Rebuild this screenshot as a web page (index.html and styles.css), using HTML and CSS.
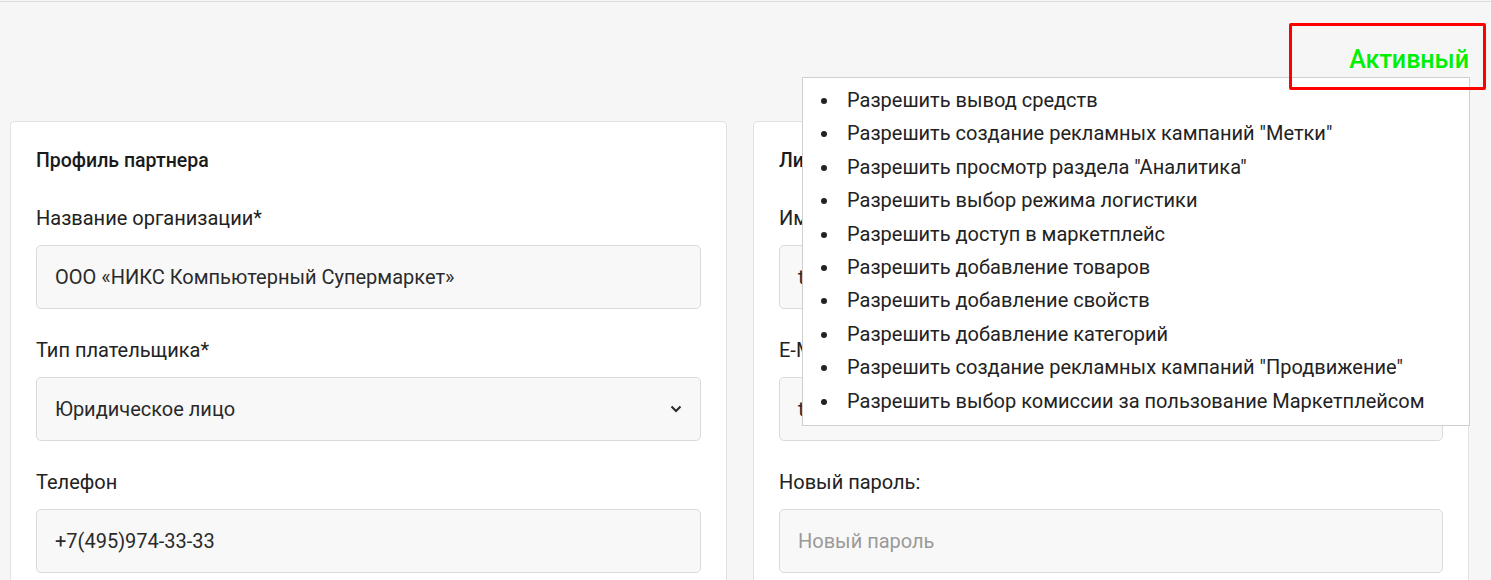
FILE: index.html
```html
<!DOCTYPE html>
<html lang="ru">
<head>
<meta charset="utf-8">
<title>Профиль партнера</title>
<link rel="stylesheet" href="styles.css">
</head>
<body>
<div class="page">
  <header class="topbar">
    <div class="status">Активный</div>
  </header>
  <main class="cards">
    <section class="card">
      <h2 class="card-title">Профиль партнера</h2>
      <div class="field">
        <label class="label">Название организации*</label>
        <div class="input">ООО «НИКС Компьютерный Супермаркет»</div>
      </div>
      <div class="field">
        <label class="label">Тип плательщика*</label>
        <div class="input select">
          <span>Юридическое лицо</span>
          <svg class="chev" width="12" height="8" viewBox="0 0 12 8"><path d="M1.5 1.5 L6 6 L10.5 1.5" fill="none" stroke="#2a2a2a" stroke-width="2"/></svg>
        </div>
      </div>
      <div class="field">
        <label class="label">Телефон</label>
        <div class="input">+7(495)974-33-33</div>
      </div>
    </section>
    <section class="card">
      <h2 class="card-title">Личные данные</h2>
      <div class="field">
        <label class="label">Имя</label>
        <div class="input">test</div>
      </div>
      <div class="field">
        <label class="label">E-Mail</label>
        <div class="input">test@nix.ru</div>
      </div>
      <div class="field">
        <label class="label">Новый пароль:</label>
        <div class="input placeholder">Новый пароль</div>
      </div>
    </section>
  </main>
  <ul class="perms">
    <li>Разрешить вывод средств</li>
    <li>Разрешить создание рекламных кампаний "Метки"</li>
    <li>Разрешить просмотр раздела "Аналитика"</li>
    <li>Разрешить выбор режима логистики</li>
    <li>Разрешить доступ в маркетплейс</li>
    <li>Разрешить добавление товаров</li>
    <li>Разрешить добавление свойств</li>
    <li>Разрешить добавление категорий</li>
    <li>Разрешить создание рекламных кампаний "Продвижение"</li>
    <li>Разрешить выбор комиссии за пользование Маркетплейсом</li>
  </ul>
  <div class="highlight"></div>
</div>
</body>
</html>
```

FILE: styles.css
```css
html, body {
  margin: 0;
  padding: 0;
  background: #f6f6f6;
}
body {
  font-family: Roboto, "Noto Sans", "Liberation Sans", sans-serif;
  color: #212121;
  padding-top: 1px;
}
.page {
  position: relative;
  border-top: 1px solid #dcdcdc;
  height: 578px;
  overflow: hidden;
}
.topbar {
  height: 119px;
  display: flex;
  justify-content: flex-end;
  padding-right: 22px;
}
.status {
  margin-top: 43px;
  height: 30px;
  line-height: 30px;
  font-size: 25px;
  font-weight: 500;
  color: #00f000;
}
.cards {
  display: grid;
  grid-template-columns: 717px 716px;
  column-gap: 26px;
  padding-left: 10px;
}
.card {
  background: #fff;
  border: 1px solid #e2e2e2;
  border-radius: 4px;
  padding: 29px 25px 30px;
  min-height: 500px;
}
.card-title {
  margin: 0 0 36px;
  font-size: 19.5px;
  line-height: 20px;
  font-weight: 500;
  color: #1a1a1a;
}
.field {
  margin-bottom: 30px;
}
.label {
  display: block;
  font-size: 20px;
  line-height: 22px;
  margin-bottom: 16px;
  color: #222;
}
.input {
  height: 62px;
  box-sizing: content-box;
  border: 1px solid #dadada;
  border-radius: 5px;
  background: #f8f8f8;
  padding: 0 18px;
  display: flex;
  align-items: center;
  font-size: 20px;
  color: #2a2a2a;
}
.select {
  justify-content: space-between;
  padding-right: 18px;
}
.chev {
  display: block;
}
.placeholder {
  color: #9a9a9a;
}
.perms {
  position: absolute;
  top: 75px;
  left: 802px;
  width: 629px;
  margin: 0;
  padding: 6px 0 7px 37px;
  background: #fff;
  border: 1px solid #cfcfcf;
  list-style: disc;
  font-size: 20px;
  line-height: 33.4px;
  color: #222;
}
.perms li {
  padding-left: 7px;
}
.highlight {
  position: absolute;
  top: 21px;
  left: 1289px;
  width: 191px;
  height: 61px;
  border: 3px solid #ff0000;
  border-radius: 2px;
}
```
